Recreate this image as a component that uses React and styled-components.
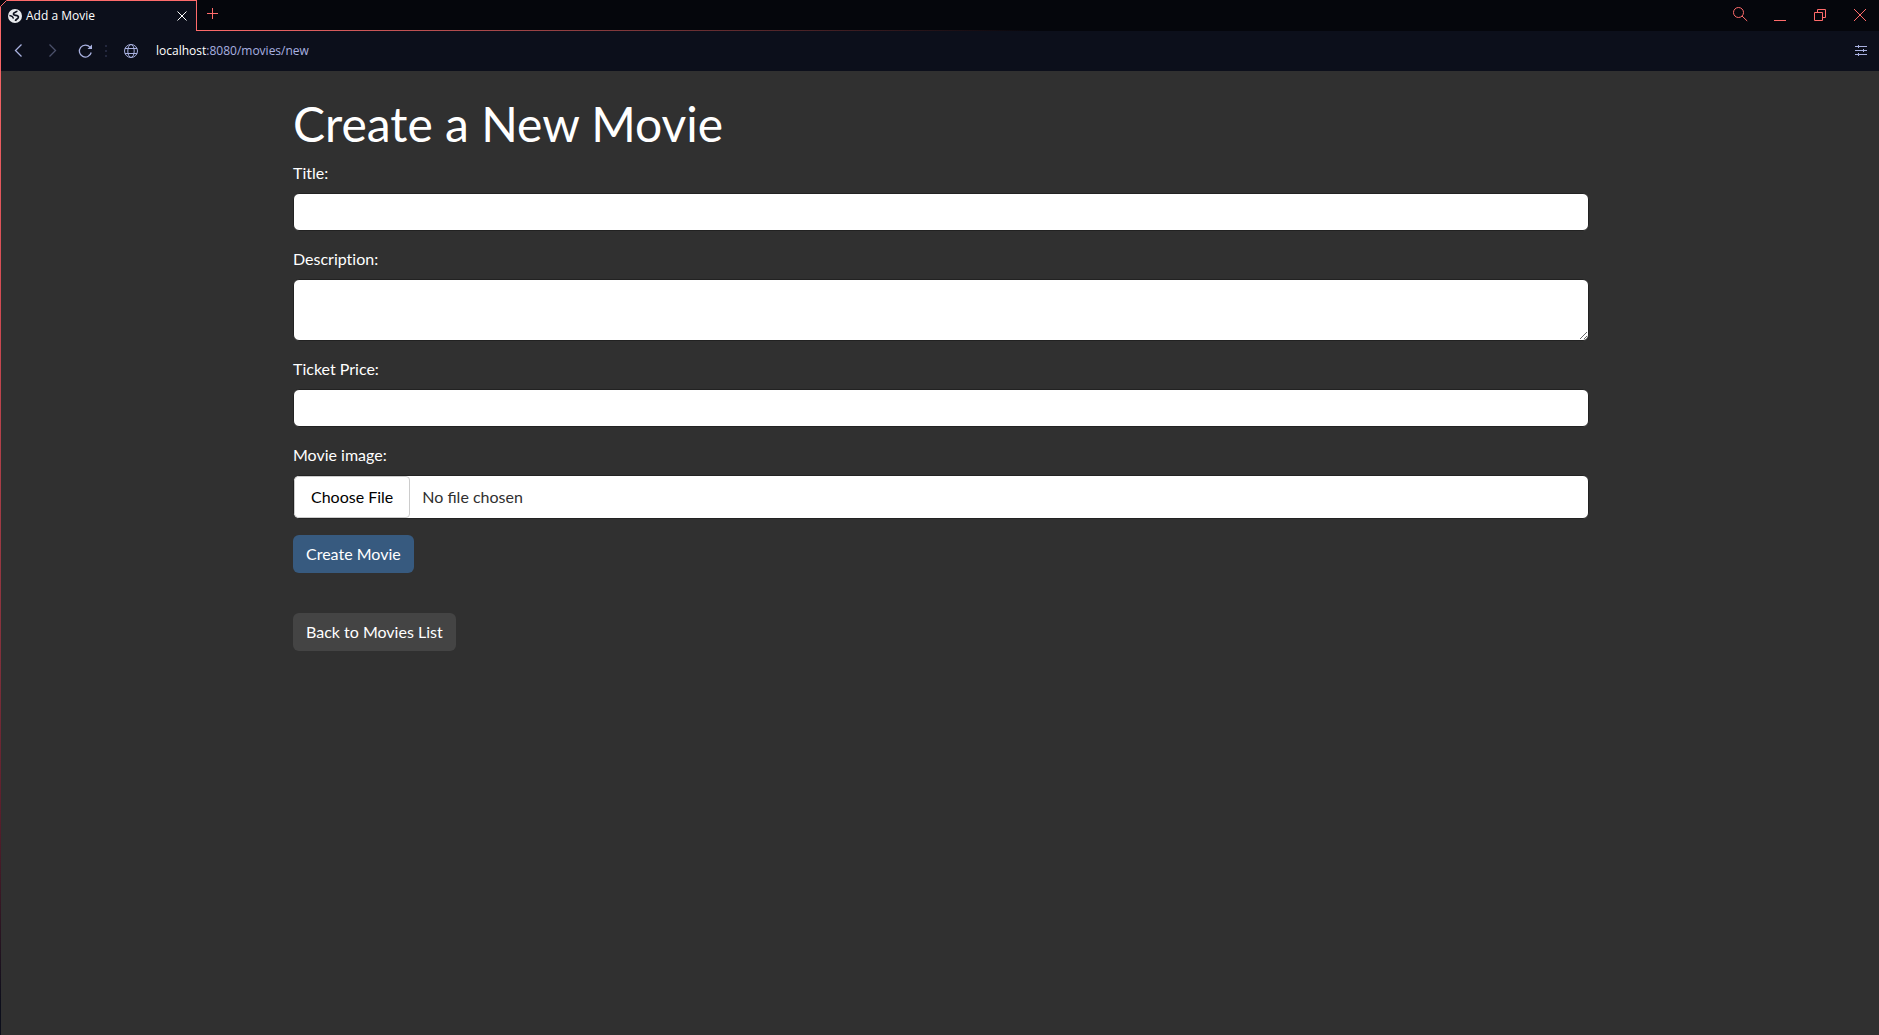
import React from "react";
import styled, { createGlobalStyle } from "styled-components";

const coral = "#ff6b6b";
const lilac = "#a9b1e0";

const GlobalStyle = createGlobalStyle`
  *, *::before, *::after { box-sizing: border-box; }
  html, body, #root { height: 100%; }
  body { margin: 0; background: #303030; }
`;

const Browser = styled.div`
  display: flex;
  flex-direction: column;
  min-height: 100%;
  border-left: 1px solid;
  border-image: linear-gradient(${coral} 0%, #d04a52 30%, #7e2f3a 65%, #5c1f2c 78%, #0c0e1b 97%) 1;
  font-family: "Open Sans", "Noto Sans", sans-serif;
`;

const TabStrip = styled.header`
  display: flex;
  height: 31px;
  background: #05060c;
`;

const Tab = styled.div`
  position: relative;
  display: flex;
  align-items: center;
  gap: 4px;
  width: 196px;
  padding: 0 8px 0 7px;
  background: #0c0f1b;
  border-top: 1px solid ${coral};
  border-right: 1px solid ${coral};
  color: #fff;
  font-size: 12px;
  line-height: 16px;
`;

const CutCorner = styled.svg`
  position: absolute;
  top: -1px;
  left: -1px;
`;

const TabTitle = styled.span`
  flex: 1;
  white-space: nowrap;
`;

const StripRest = styled.div`
  flex: 1;
  display: flex;
  align-items: center;
  padding: 0 11px 0 8px;
  border-bottom: 1px solid;
  border-image: linear-gradient(90deg, ${coral} 0%, #05060c 50%) 1;
`;

const WindowButtons = styled.div`
  display: flex;
  align-items: center;
  gap: 24px;
  margin-left: auto;
`;

const IconButton = styled.button`
  display: flex;
  flex: none;
  padding: 0;
  border: 0;
  background: none;
  color: ${(p) => p.$color || lilac};
  opacity: ${(p) => (p.disabled ? 0.4 : 1)};
`;

const Toolbar = styled.nav`
  display: flex;
  align-items: center;
  height: 40px;
  padding: 0 12px 0 10px;
  gap: 17px;
  background: #0c0f1b;
`;

const Separator = styled.span`
  width: 2px;
  height: 12px;
  margin: 0 -1px 0 -5px;
  background: repeating-linear-gradient(#23273d 0 2px, transparent 2px 5px);
`;

const Address = styled.a`
  flex: 1;
  color: ${lilac};
  font-size: 12px;
  line-height: 16px;
  text-decoration: none;
`;

const Host = styled.span`
  color: #fff;
`;

const Page = styled.main`
  flex: 1;
  padding-left: 2px;
  background: #303030;
  color: #fff;
  font-family: Lato, sans-serif;
  font-size: 16px;
  line-height: 24px;
`;

const Container = styled.div`
  display: flex;
  flex-direction: column;
  align-items: flex-start;
  gap: 40px;
  max-width: 1320px;
  margin: 0 auto;
  padding: 24px 12px;
`;

const MovieForm = styled.form`
  display: flex;
  flex-direction: column;
  align-items: flex-start;
  gap: 16px;
  width: 100%;
`;

const Heading = styled.h1`
  margin: 0 0 -8px;
  font-size: 48px;
  font-weight: 400;
  line-height: 58px;
`;

const Field = styled.div`
  display: flex;
  flex-direction: column;
  gap: 8px;
  width: 100%;
`;

const Label = styled.label`
  font-variant-ligatures: none;
`;

const TextInput = styled.input`
  display: block;
  width: 100%;
  min-height: 38px;
  padding: 6px 12px;
  border: 1px solid #222;
  border-radius: 6px;
  background: #fff;
  color: #303030;
  font: inherit;
`;

const FileInput = styled(TextInput)`
  padding: 0;

  &::file-selector-button {
    margin: 0 12px 0 0;
    padding: 8px 16px;
    border: 1px solid #ccc;
    border-radius: 4px;
    background: #fff;
    color: #000;
    font: inherit;
  }
`;

const buttonLook = `
  padding: 6px 12px;
  border: 1px solid transparent;
  border-radius: 6px;
  color: #fff;
  font: inherit;
  text-decoration: none;
`;

const SubmitButton = styled.button`
  ${buttonLook}
  background: #375a7f;
`;

const BackLink = styled.a`
  ${buttonLook}
  background: #444;
`;

const Icon = ({ w = 14, h = 14, children }) => (
  <svg width={w} height={h} viewBox={`0 0 ${w} ${h}`} fill="none" stroke="currentColor" aria-hidden="true">
    {children}
  </svg>
);

const Favicon = () => (
  <svg width="14" height="14" viewBox="0 0 14 14" fill="none" stroke="#0c0f1b" aria-hidden="true">
    <circle cx="7" cy="7" r="7" fill="#e8eaed" stroke="none" />
    <path d="M9 1.8C9 3.6 5.4 3 5.4 5S10.4 5.6 10.4 8 8 9.6 7.4 12" strokeWidth="1.7" />
    <path d="M1.4 6.4C3 6.6 5.6 7.8 5.2 9.6" strokeWidth="1.5" />
  </svg>
);

export default function App() {
  return (
    <>
      <GlobalStyle />
      <Browser>
        <TabStrip>
          <Tab>
            <CutCorner width="7" height="7" viewBox="0 0 7 7" aria-hidden="true">
              <path d="M0 0h7L0 7z" fill="#05060c" />
              <path d="M0.5 6.5l6-6" stroke={coral} />
            </CutCorner>
            <Favicon />
            <TabTitle>Add a Movie</TabTitle>
            <IconButton type="button" aria-label="Close tab" $color="#fff">
              <Icon w={12} h={12}>
                <path d="M1.5 1.5l9 9M10.5 1.5l-9 9" />
              </Icon>
            </IconButton>
          </Tab>
          <StripRest>
            <IconButton type="button" aria-label="New tab" $color={coral}>
              <Icon w={15} h={14}>
                <path d="M7.5 0v11M2 5.5h11" />
              </Icon>
            </IconButton>
            <WindowButtons>
              <IconButton type="button" aria-label="Search tabs" $color={coral}>
                <Icon w={16} h={16}>
                  <circle cx="6.5" cy="5.5" r="5" />
                  <path d="M10 9l5.2 5" />
                </Icon>
              </IconButton>
              <IconButton type="button" aria-label="Minimize" $color={coral}>
                <Icon w={16} h={16}>
                  <path d="M2 13.5h12" />
                </Icon>
              </IconButton>
              <IconButton type="button" aria-label="Restore" $color={coral}>
                <Icon w={16} h={16}>
                  <path d="M2.5 5.5h8v8h-8zM5.5 5.5v-3h8v8h-3" />
                </Icon>
              </IconButton>
              <IconButton type="button" aria-label="Close window" $color={coral}>
                <Icon w={16} h={16}>
                  <path d="M2 2l12 12M14 2L2 14" />
                </Icon>
              </IconButton>
            </WindowButtons>
          </StripRest>
        </TabStrip>
        <Toolbar>
          <IconButton type="button" aria-label="Back">
            <Icon w={16} h={16}>
              <path d="M10.5 1.5l-6 6 6 6" strokeWidth="1.3" />
            </Icon>
          </IconButton>
          <IconButton type="button" aria-label="Forward" disabled>
            <Icon w={16} h={16}>
              <path d="M5.5 1.5l6 6-6 6" strokeWidth="1.3" />
            </Icon>
          </IconButton>
          <IconButton type="button" aria-label="Reload">
            <Icon w={16} h={16}>
              <path d="M13 4.2A6 6 0 1 0 14.2 9.5" strokeWidth="1.3" />
              <path d="M15 1.5V6h-4.5z" fill="currentColor" stroke="none" />
            </Icon>
          </IconButton>
          <Separator />
          <IconButton type="button" aria-label="Site information">
            <Icon w={16} h={16}>
              <circle cx="8" cy="8" r="6.5" />
              <ellipse cx="8" cy="8" rx="3.2" ry="6.5" />
              <path d="M2 5.5h12M2 10.5h12" />
            </Icon>
          </IconButton>
          <Address href="#address">
            <Host>localhost</Host>:8080/movies/new
          </Address>
          <IconButton type="button" aria-label="Easy setup">
            <Icon w={12} h={12}>
              <path d="M0 1.5h12M0 5.5h12M0 9.5h12M3.5 0v3M8.5 4v3M3.5 8v3" />
            </Icon>
          </IconButton>
        </Toolbar>
        <Page>
          <Container>
            <MovieForm onSubmit={(e) => e.preventDefault()}>
              <Heading>Create a New Movie</Heading>
              <Field>
                <Label htmlFor="title">Title:</Label>
                <TextInput id="title" type="text" />
              </Field>
              <Field>
                <Label htmlFor="description">Description:</Label>
                <TextInput as="textarea" id="description" rows={2} />
              </Field>
              <Field>
                <Label htmlFor="price">Ticket Price:</Label>
                <TextInput id="price" type="text" />
              </Field>
              <Field>
                <Label htmlFor="image">Movie image:</Label>
                <FileInput id="image" type="file" />
              </Field>
              <SubmitButton type="submit">Create Movie</SubmitButton>
            </MovieForm>
            <BackLink href="#movies">Back to Movies List</BackLink>
          </Container>
        </Page>
      </Browser>
    </>
  );
}
